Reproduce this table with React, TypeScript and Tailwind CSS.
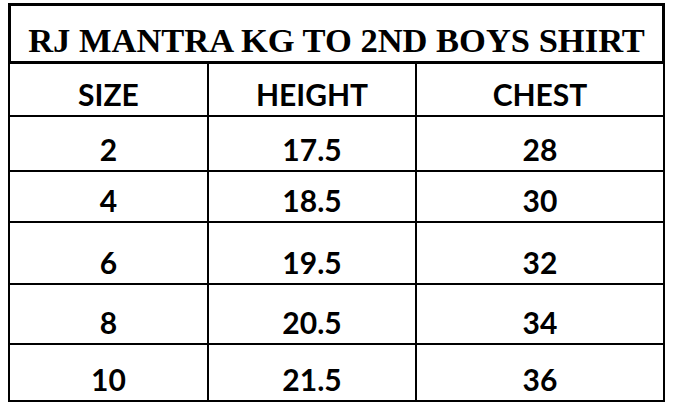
const rows = [
  { size: '2', height: '17.5', chest: '28', h: 'h-[55px]' },
  { size: '4', height: '18.5', chest: '30', h: 'h-[51px]' },
  { size: '6', height: '19.5', chest: '32', h: 'h-[62px]' },
  { size: '8', height: '20.5', chest: '34', h: 'h-[60px]' },
  { size: '10', height: '21.5', chest: '36', h: 'h-[57px]' },
];

function Row({ cells, h }: { cells: string[]; h: string }) {
  return (
    <div className={`flex border-b-2 border-black ${h}`}>
      <div className="w-[199px] border-r-2 border-black flex items-end justify-center pb-[6px]">{cells[0]}</div>
      <div className="w-[208px] border-r-2 border-black flex items-end justify-center pb-[6px]">{cells[1]}</div>
      <div className="w-[246px] flex items-end justify-center pb-[6px]">{cells[2]}</div>
    </div>
  );
}

export default function App() {
  return (
    <div className="bg-white w-[674px] h-[414px] pt-[3px] pl-[8px]">
      <div className="w-[657px]">
        <div className="h-[61px] border-[3px] border-black flex items-end justify-center pb-[4px]">
          <span className="font-['Liberation_Serif',serif] font-bold text-[34.5px] leading-none text-black">
            RJ MANTRA KG TO 2ND BOYS SHIRT
          </span>
        </div>
        <div className="border-x-2 border-black font-['Lato',sans-serif] font-bold text-[30px] leading-none text-black">
          <Row cells={['SIZE', 'HEIGHT', 'CHEST']} h="h-[53px]" />
          {rows.map((r) => (
            <Row key={r.size} cells={[r.size, r.height, r.chest]} h={r.h} />
          ))}
        </div>
      </div>
    </div>
  );
}
